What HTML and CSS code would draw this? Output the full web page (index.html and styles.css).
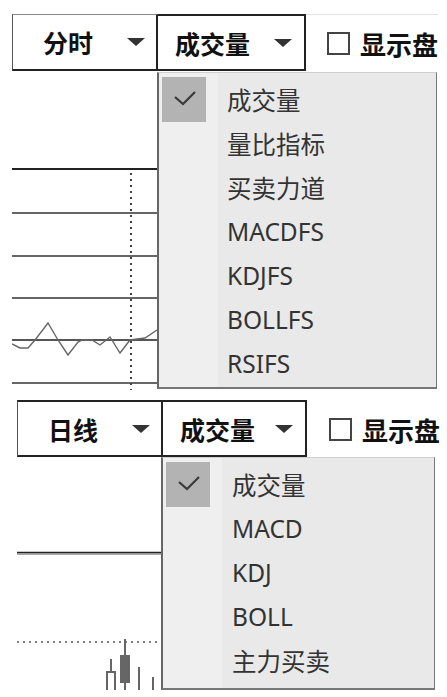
FILE: index.html
```html
<!DOCTYPE html>
<html>

<head>
	<meta charset="utf-8">
	<title>成交量菜单</title>
	<link rel="stylesheet" href="styles.css">
</head>

<body>

	<!-- 分时 -->
	<div class="panel panel-fs">
		<div class="toolbar">
			<div class="sel sel-period"><span class="label">分时</span><i class="arrow"></i></div>
			<div class="sel sel-index"><span class="label">成交量</span><i class="arrow"></i></div>
			<div class="opt"><span class="box"></span><span class="opt-text">显示盘</span></div>
		</div>

		<svg class="chart chart-fs" width="146" height="319" viewBox="0 0 146 319">
			<line x1="0" y1="98" x2="146" y2="98" stroke="#222" stroke-width="2" />
			<line x1="0" y1="142" x2="146" y2="142" stroke="#666" stroke-width="2" />
			<line x1="0" y1="185" x2="146" y2="185" stroke="#666" stroke-width="2" />
			<line x1="0" y1="227" x2="146" y2="227" stroke="#666" stroke-width="2" />
			<line x1="0" y1="269" x2="146" y2="269" stroke="#555" stroke-width="2" />
			<line x1="0" y1="312" x2="146" y2="312" stroke="#666" stroke-width="2" />
			<line x1="119" y1="102" x2="119" y2="319" stroke="#444" stroke-width="2" stroke-dasharray="2 4" />
			<polyline fill="none" stroke="#666" stroke-width="1.4"
				points="0,273 8,277 16,277 23,269 36,252 46,269 56,284 66,271 70,269 80,269 88,274 98,266 108,282 118,269 125,268 133,267 145,259" />
		</svg>

		<ul class="menu">
			<li class="item checked"><span class="mark"><svg width="44" height="45"><polyline points="13,20 21,27 33,15" fill="none" stroke="#3a3a3a" stroke-width="2.2" /></svg></span><span class="text">成交量</span></li>
			<li class="item"><span class="mark"></span><span class="text">量比指标</span></li>
			<li class="item"><span class="mark"></span><span class="text">买卖力道</span></li>
			<li class="item"><span class="mark"></span><span class="text">MACDFS</span></li>
			<li class="item"><span class="mark"></span><span class="text">KDJFS</span></li>
			<li class="item"><span class="mark"></span><span class="text">BOLLFS</span></li>
			<li class="item"><span class="mark"></span><span class="text">RSIFS</span></li>
		</ul>
	</div>

	<!-- 日线 -->
	<div class="panel panel-day">
		<div class="toolbar">
			<div class="sel sel-period"><span class="label">日线</span><i class="arrow"></i></div>
			<div class="sel sel-index"><span class="label">成交量</span><i class="arrow"></i></div>
			<div class="opt"><span class="box"></span><span class="opt-text">显示盘</span></div>
		</div>

		<svg class="chart chart-day" width="146" height="233" viewBox="0 0 146 233">
			<line x1="0" y1="95.5" x2="146" y2="95.5" stroke="#222" stroke-width="1.5" />
			<line x1="0" y1="97" x2="146" y2="97" stroke="#888" stroke-width="1.5" />
			<line x1="0" y1="185" x2="146" y2="185" stroke="#555" stroke-width="1.5" stroke-dasharray="2 4" />
			<g stroke="#666" stroke-width="2" fill="none">
				<line x1="94" y1="202" x2="94" y2="215" />
				<polyline points="90,233 90,215 98,215 98,233" />
				<line x1="108" y1="182" x2="108" y2="233" />
				<line x1="122" y1="210" x2="122" y2="233" />
				<line x1="136" y1="220" x2="136" y2="233" />
			</g>
			<rect x="103" y="198" width="10" height="28" fill="#666" />
		</svg>

		<ul class="menu">
			<li class="item checked"><span class="mark"><svg width="44" height="45"><polyline points="13,20 21,27 33,15" fill="none" stroke="#3a3a3a" stroke-width="2.2" /></svg></span><span class="text">成交量</span></li>
			<li class="item"><span class="mark"></span><span class="text">MACD</span></li>
			<li class="item"><span class="mark"></span><span class="text">KDJ</span></li>
			<li class="item"><span class="mark"></span><span class="text">BOLL</span></li>
			<li class="item"><span class="mark"></span><span class="text">主力买卖</span></li>
		</ul>
	</div>

</body>

</html>
```

FILE: styles.css
```css
* {
	padding: 0px;
	margin: 0px;
	list-style: none;
	box-sizing: border-box;
}

body {
	background-color: #fff;
	color: #1a1a1a;
	font-family: "Noto Sans", "Noto Sans CJK SC", sans-serif;
}

.panel {
	position: relative;
	width: 426px;
}

.panel-fs {
	margin: 14px 0px 0px 12px;
}

.panel-day {
	margin: 10px 0px 0px 17px;
}

/* 工具条 */
.toolbar {
	display: flex;
	height: 57px;
}

.sel {
	display: flex;
	align-items: center;
	justify-content: space-between;
	height: 57px;
	font-family: "Noto Sans CJK SC", sans-serif;
	font-weight: 700;
	font-size: 25px;
	color: #111;
}

.sel-period {
	width: 146px;
	padding: 0px 11px 0px 30px;
	border-left: 1px solid #555;
	border-top: 1px solid #888;
	border-bottom: 2px solid #222;
	border-right: 2px solid #222;
}

.panel-day .sel-period {
	border-top: 2px solid #222;
}

.sel-index {
	width: 148px;
	padding: 0px 12px 0px 17px;
	border-top: 2px solid #222;
	border-right: 2px solid #222;
	border-bottom: 2px solid #222;
}

.panel-day .sel-index {
	width: 144px;
}

.arrow {
	width: 0px;
	height: 0px;
	border-left: 9px solid transparent;
	border-right: 9px solid transparent;
	border-top: 8px solid #333;
}

.opt {
	flex: 1;
	display: flex;
	align-items: center;
	padding-left: 21px;
	border-top: 1px solid #e2e2e2;
	font-family: "Noto Sans CJK SC", sans-serif;
	font-weight: 700;
	font-size: 26px;
	color: #111;
}

.panel-day .opt {
	border-top-color: #fff;
	padding-left: 22px;
}

.opt .box {
	width: 23px;
	height: 23px;
	border: 2px solid #444;
	margin-right: 10px;
}

.chart {
	display: block;
}

/* 下拉菜单 */
.menu {
	position: absolute;
	left: 145px;
	top: 58px;
	width: 280px;
	padding: 4px 0px 2px;
	border-top: 1px solid #cfcfcf;
	border-left: 2px solid #666;
	border-right: 1px solid #777;
	border-bottom: 2px solid #777;
	background: linear-gradient(to right, #efefef 59px, #e9e9e9 59px);
	font-size: 24.5px;
	color: #333;
}

.panel-day .menu {
	left: 144px;
	top: 57px;
	width: 274px;
	padding-bottom: 6px;
}

.item {
	display: flex;
	align-items: center;
	height: 44px;
}

.mark {
	width: 44px;
	height: 44px;
	margin-left: 3px;
	margin-right: 21px;
}

.panel-day .mark {
	margin-right: 22px;
}

.checked .mark {
	height: 45px;
	background-color: #b3b3b3;
}

.mark svg {
	display: block;
}
```
